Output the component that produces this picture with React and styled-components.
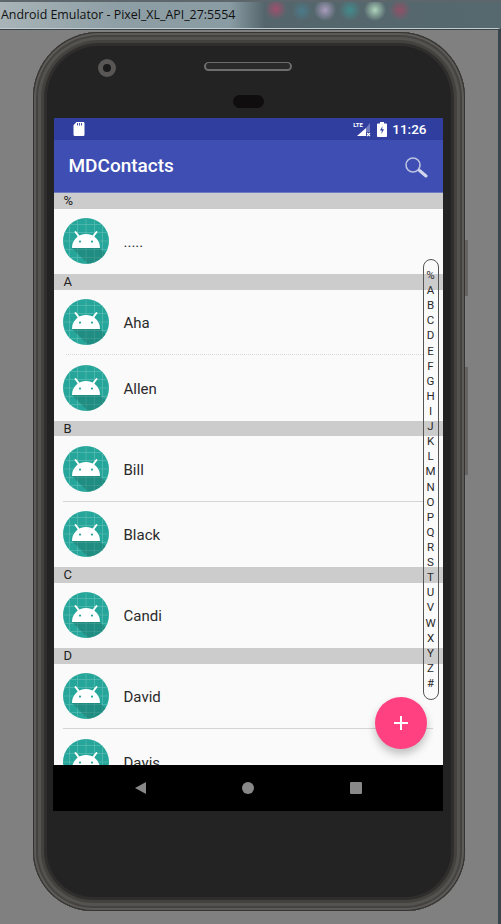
import React from 'react';
import styled, { createGlobalStyle } from 'styled-components';

const GlobalStyle = createGlobalStyle`
    html, body {
        margin: 0;
        padding: 0;
        height: 100%;
        overflow: hidden;
        background: #808080;
    }
`;

const Window = styled.div`
    width: 501px;
    height: 924px;
    display: flex;
    flex-direction: column;
    overflow: hidden;
`;

const TitleBar = styled.div`
    height: 28px;
    box-sizing: border-box;
    flex-shrink: 0;
    padding: 4px 0 0 1px;
    border-top: 2px solid #5c666b;
    font: 12.4px/18px 'Open Sans', 'Liberation Sans', sans-serif;
    color: #111;
    background:
        radial-gradient(circle at 276px 7px, rgba(190, 70, 110, 0.7), transparent 11px),
        radial-gradient(circle at 302px 9px, rgba(70, 130, 150, 0.7), transparent 10px),
        radial-gradient(circle at 325px 8px, rgba(190, 170, 210, 0.8), transparent 11px),
        radial-gradient(circle at 350px 8px, rgba(60, 150, 150, 0.75), transparent 11px),
        radial-gradient(circle at 375px 8px, rgba(190, 230, 200, 0.85), transparent 11px),
        radial-gradient(circle at 400px 8px, rgba(170, 70, 100, 0.7), transparent 11px),
        linear-gradient(90deg, #a8b4b8 0, #8d9ea4 120px, #8a9ca3 230px, #54666c 265px, #56696f 500px);
`;

const Stage = styled.div`
    flex: 1;
    padding: 3px 0 0 33px;
    background: #808080;
    border-top: 1px solid #c2cbce;
    border-right: 3px solid #39444b;
    box-shadow: inset 0 1px 0 #39444b;
`;

const Phone = styled.div`
    position: relative;
    width: 432px;
    height: 879px;
    box-sizing: border-box;
    display: flex;
    flex-direction: column;
    align-items: center;
    padding-right: 2px;
    border-radius: 66px 66px 60px 60px;
    background: #242323;
    box-shadow:
        inset 0 0 0 1px #363432,
        inset 0 0 0 3px #5c5a57,
        inset 0 0 0 5px #454341,
        inset 0 0 0 8px #55534f,
        inset 0 0 0 11px #44423f,
        inset 0 0 0 14px #2f2e2d;
`;

const SideButton = styled.div`
    position: absolute;
    right: -3px;
    top: ${(props) => props.top}px;
    width: 3px;
    height: ${(props) => props.height}px;
    background: #656462;
`;

const TopBezel = styled.div`
    width: 100%;
    height: 86px;
    flex-shrink: 0;
    display: flex;
    flex-direction: column;
    align-items: center;
`;

const SensorRow = styled.div`
    width: 100%;
    height: 45px;
    display: grid;
    grid-template-columns: 1fr auto 1fr;
    align-items: end;
`;

const Camera = styled.div`
    width: 18px;
    height: 18px;
    margin-left: 65px;
    box-sizing: border-box;
    border-radius: 50%;
    border: 5px solid #585756;
    background: #1a1a1a;
`;

const Speaker = styled.div`
    width: 88px;
    height: 9px;
    margin-bottom: 6px;
    box-sizing: border-box;
    border-radius: 5px;
    border: 2px solid #6f6e6c;
    border-top-width: 1px;
    background: #2a2a2a;
`;

const Sensor = styled.div`
    width: 31px;
    height: 13px;
    margin-top: 18px;
    border-radius: 7px;
    background: #0f0d0d;
`;

const Screen = styled.div`
    position: relative;
    width: 389px;
    height: 647px;
    flex-shrink: 0;
    display: flex;
    flex-direction: column;
    overflow: hidden;
    background: #fafafa;
`;

const StatusBar = styled.div`
    height: 22px;
    flex-shrink: 0;
    display: flex;
    align-items: center;
    padding: 0 16px 0 19px;
    background: #303f9f;
    color: #fff;
`;

const StatusRight = styled.div`
    margin-left: auto;
    display: flex;
    align-items: center;
    gap: 9px;
`;

const NetworkIcon = styled.div`
    position: relative;
    display: flex;
    margin-right: -3px;
`;

const LteLabel = styled.span`
    position: absolute;
    left: 0;
    top: -1px;
    font: 700 6px/7px 'Roboto', sans-serif;
    color: #fff;
`;

const Clock = styled.span`
    font: 500 13.5px/16px 'Roboto', sans-serif;
    margin-left: -4px;
`;

const Toolbar = styled.div`
    height: 53px;
    box-sizing: border-box;
    flex-shrink: 0;
    display: flex;
    align-items: center;
    justify-content: space-between;
    padding: 0 15px;
    background: #3e4eb2;
    border-bottom: 1px solid #6d7ac4;
`;

const AppTitle = styled.span`
    font: 500 19px/24px 'Roboto', sans-serif;
    color: #fff;
`;

const SectionHeader = styled.div`
    height: 15.5px;
    flex-shrink: 0;
    padding-left: 10px;
    background: #cccccc;
    font: 13px/16px 'Roboto', sans-serif;
    color: #222;
`;

const Row = styled.div`
    position: relative;
    height: 65.5px;
    flex-shrink: 0;
    display: flex;
    align-items: center;
    gap: 15px;
    padding-left: 9px;
`;

const Divider = styled.div`
    position: absolute;
    left: ${(props) => (props.$dotted ? 12 : 9)}px;
    right: ${(props) => (props.$wide ? 10 : 20)}px;
    bottom: 0;
    border-bottom: 1px ${(props) => (props.$dotted ? 'dotted #d8d8d8' : 'solid #d4d4d4')};
`;

const Name = styled.span`
    padding-top: 2px;
    font: 15px/20px 'Roboto', sans-serif;
    color: #2a2a2a;
`;

const IndexBar = styled.div`
    position: absolute;
    left: 369px;
    top: 141px;
    width: 16px;
    height: 441px;
    box-sizing: border-box;
    padding: 8px 0;
    display: flex;
    flex-direction: column;
    border: 1px solid #555;
    border-radius: 9px;
`;

const IndexLetter = styled.span`
    height: 15.2px;
    text-align: center;
    font: 11.5px/15px 'Roboto', sans-serif;
    color: #2c2c2c;
`;

const Fab = styled.div`
    position: absolute;
    left: 321px;
    top: 579px;
    width: 52px;
    height: 52px;
    display: flex;
    align-items: center;
    justify-content: center;
    border-radius: 50%;
    background: #ff4081;
    box-shadow: 0 5px 8px rgba(0, 0, 0, 0.24);
`;

const NavBar = styled.div`
    width: 390px;
    height: 46px;
    flex-shrink: 0;
    display: flex;
    align-items: center;
    justify-content: center;
    gap: 96px;
    background: #000;
`;

const NavBack = styled.div`
    width: 0;
    height: 0;
    border-style: solid;
    border-width: 6.5px 11px 6.5px 0;
    border-color: transparent #888 transparent transparent;
`;

const NavHome = styled.div`
    width: 12px;
    height: 12px;
    border-radius: 50%;
    background: #888;
`;

const NavRecent = styled.div`
    width: 12px;
    height: 12px;
    border-radius: 1px;
    background: #888;
`;

const SdCardIcon = () => (
    <svg width="12" height="14" viewBox="0 0 12 14">
        <path d="M3.5 0H10.5A1.2 1.2 0 0 1 11.5 1.2V12.8A1.2 1.2 0 0 1 10.3 14H1.5A1.2 1.2 0 0 1 .5 12.8V3.2Z" fill="#fff" />
        <path d="M4.5 1v2.5M6.5 1v2.5M8.5 1v2.5" stroke="#303f9f" strokeWidth="0.9" />
    </svg>
);

const SignalIcon = () => (
    <svg width="18" height="15" viewBox="0 0 18 15">
        <path d="M4 14L13 6V14Z" fill="#fff" />
        <path d="M13 6L17 1V10H13Z" fill="#8f98cf" opacity="0.7" />
        <path d="M14 11L17 14M17 11L14 14" stroke="#fff" strokeWidth="1.1" />
    </svg>
);

const BatteryIcon = () => (
    <svg width="10" height="15" viewBox="0 0 10 15">
        <path d="M3 0H7V1.5H9.2A.8.8 0 0 1 10 2.3V14.2A.8.8 0 0 1 9.2 15H.8A.8.8 0 0 1 0 14.2V2.3A.8.8 0 0 1 .8 1.5H3Z" fill="#fff" />
        <path d="M5.6 4L3 8.6H4.9L4.3 12L7 7.3H5.1Z" fill="#303f9f" />
    </svg>
);

const SearchIcon = () => (
    <svg width="24" height="24" viewBox="0 0 24 24" fill="none">
        <circle cx="9" cy="11" r="7" stroke="#bcc3e2" strokeWidth="1.6" />
        <path d="M15.5 16.5L22 22" stroke="#d2d6ec" strokeWidth="3" strokeLinecap="round" />
    </svg>
);

const AndroidAvatar = () => (
    <svg width="46" height="46" viewBox="0 0 46 46">
        <defs>
            <clipPath id="avatar-clip">
                <circle cx="23" cy="23" r="23" />
            </clipPath>
        </defs>
        <g clipPath="url(#avatar-clip)">
            <rect width="46" height="46" fill="#26a69a" />
            <path
                d="M6.5 0V46M14.5 0V46M23 0V46M31.5 0V46M39.5 0V46M0 6.5H46M0 14.5H46M0 23H46M0 31.5H46M0 39.5H46"
                stroke="#63c0b6"
                strokeWidth="0.6"
            />
            <path d="M9 30H37L46 39V46H25Z" fill="#17695f" opacity="0.4" />
        </g>
        <path d="M9 30A14 14 0 0 1 37 30Z" fill="#fff" />
        <path d="M12.5 14L16 18.5M33.5 14L30 18.5" stroke="#fff" strokeWidth="2" strokeLinecap="round" />
        <circle cx="17" cy="23.6" r="1.1" fill="#26a69a" />
        <circle cx="29" cy="23.6" r="1.1" fill="#26a69a" />
    </svg>
);

const SECTIONS = [
    { title: '%', names: ['.....'] },
    { title: 'A', names: ['Aha', 'Allen'], dotted: true },
    { title: 'B', names: ['Bill', 'Black'] },
    { title: 'C', names: ['Candi'] },
    { title: 'D', names: ['David', 'Davis'], wide: true },
];

const INDEX_LETTERS = ['%', ...'ABCDEFGHIJKLMNOPQRSTUVWXYZ', '#'];

const App = () => (
    <Window>
        <GlobalStyle />
        <TitleBar>Android Emulator - Pixel_XL_API_27:5554</TitleBar>
        <Stage>
            <Phone>
                <SideButton top={208} height={56} />
                <SideButton top={335} height={108} />
                <TopBezel>
                    <SensorRow>
                        <Camera />
                        <Speaker />
                    </SensorRow>
                    <Sensor />
                </TopBezel>
                <Screen>
                    <StatusBar>
                        <SdCardIcon />
                        <StatusRight>
                            <NetworkIcon>
                                <LteLabel>LTE</LteLabel>
                                <SignalIcon />
                            </NetworkIcon>
                            <BatteryIcon />
                            <Clock>11:26</Clock>
                        </StatusRight>
                    </StatusBar>
                    <Toolbar>
                        <AppTitle>MDContacts</AppTitle>
                        <SearchIcon />
                    </Toolbar>
                    {SECTIONS.map((section) => (
                        <React.Fragment key={section.title}>
                            <SectionHeader>{section.title}</SectionHeader>
                            {section.names.map((name, i) => (
                                <Row key={name}>
                                    <AndroidAvatar />
                                    <Name>{name}</Name>
                                    {i < section.names.length - 1 && (
                                        <Divider $dotted={section.dotted} $wide={section.wide} />
                                    )}
                                </Row>
                            ))}
                        </React.Fragment>
                    ))}
                    <IndexBar>
                        {INDEX_LETTERS.map((letter) => (
                            <IndexLetter key={letter}>{letter}</IndexLetter>
                        ))}
                    </IndexBar>
                    <Fab>
                        <svg width="14" height="14" viewBox="0 0 14 14">
                            <path d="M7 0V14M0 7H14" stroke="#fff" strokeWidth="2" />
                        </svg>
                    </Fab>
                </Screen>
                <NavBar>
                    <NavBack />
                    <NavHome />
                    <NavRecent />
                </NavBar>
            </Phone>
        </Stage>
    </Window>
);

export default App;
